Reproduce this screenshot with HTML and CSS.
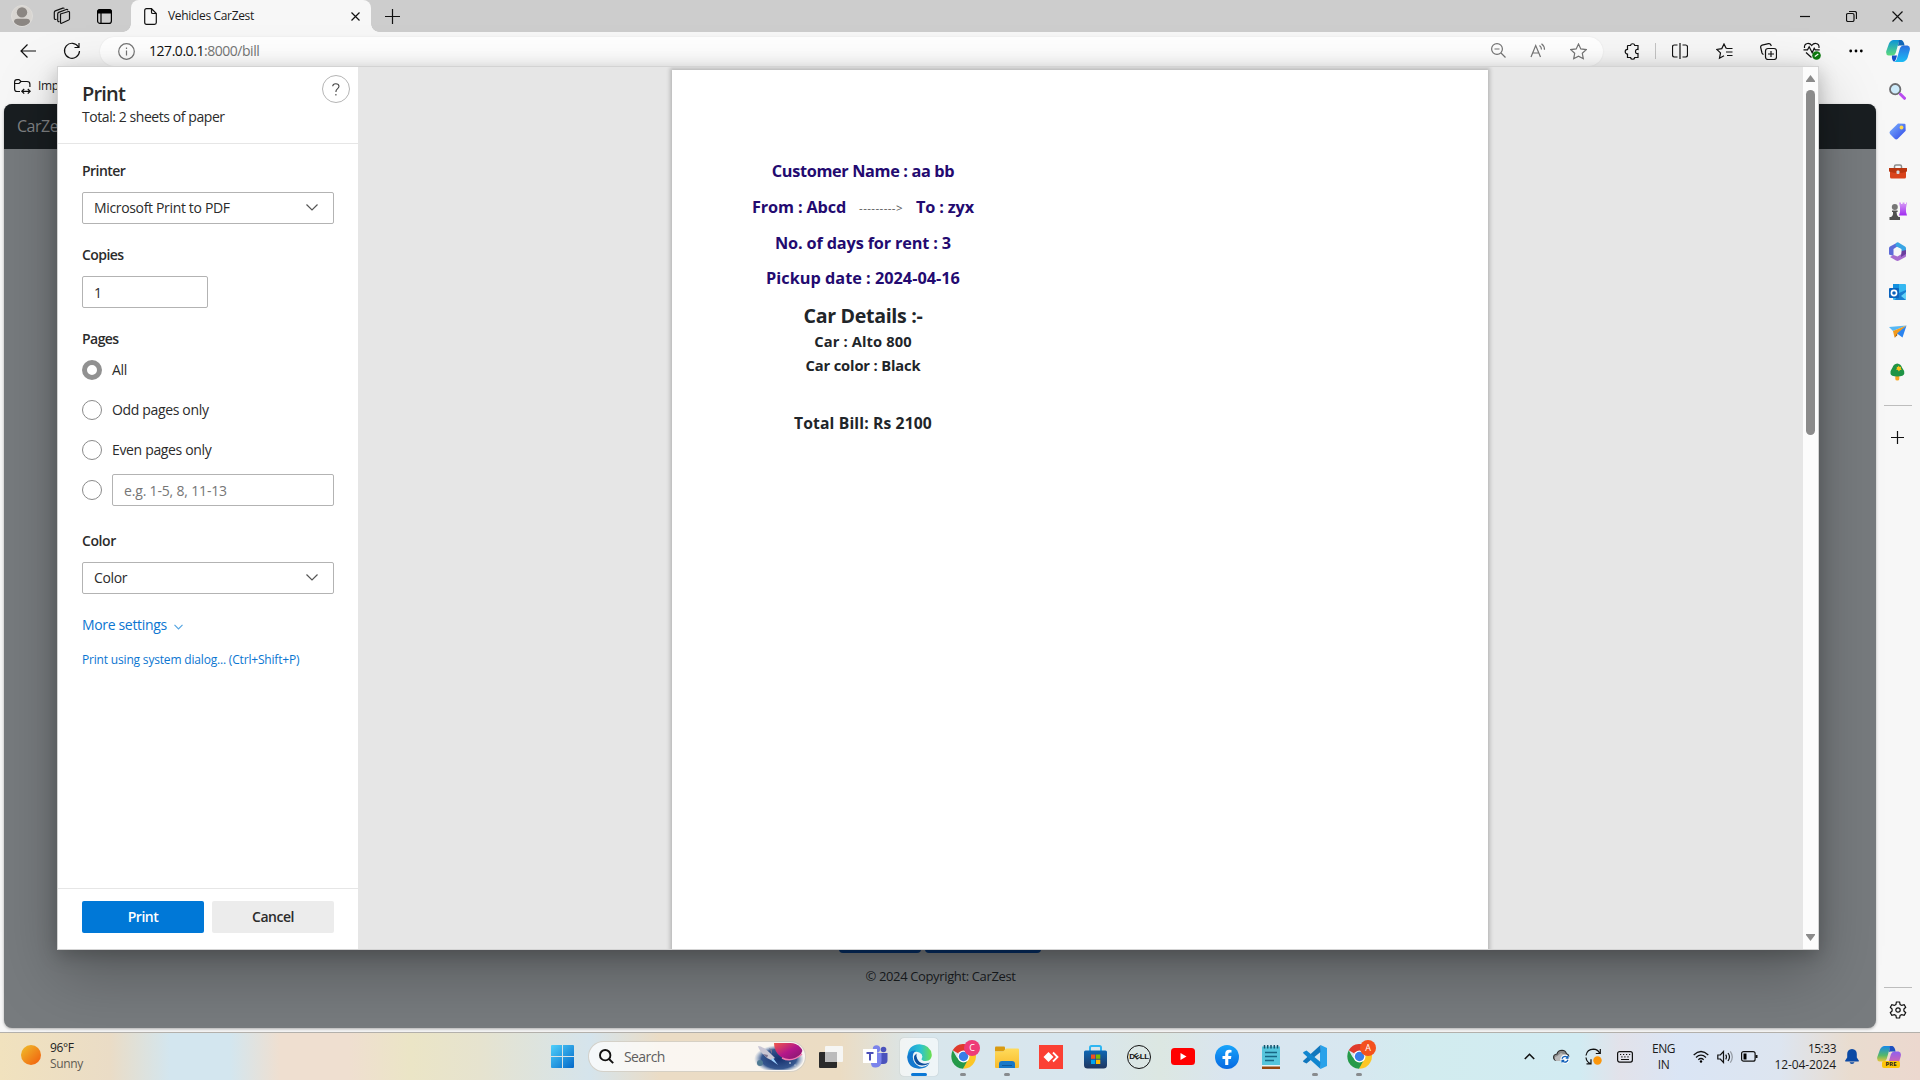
FILE: index.html
```html
<!DOCTYPE html>
<html lang="en">
<head>
<meta charset="utf-8">
<title>Vehicles CarZest</title>
<link rel="stylesheet" href="styles.css">
</head>
<body>
<svg class="defs" width="0" height="0">
  <defs>
    <linearGradient id="gWin" x1="0" y1="0" x2="1" y2="1"><stop offset="0" stop-color="#4fd0fb"/><stop offset="1" stop-color="#0469c9"/></linearGradient>
    <linearGradient id="gSun" x1="0" y1="0" x2="1" y2="1"><stop offset="0" stop-color="#efc02c"/><stop offset="1" stop-color="#f25a0c"/></linearGradient>
    <linearGradient id="gCopA" x1="0" y1="0" x2="0" y2="1"><stop offset="0" stop-color="#0c94d8"/><stop offset="1" stop-color="#5cdb7c"/></linearGradient>
    <linearGradient id="gCopB" x1="0" y1="0" x2="0" y2="1"><stop offset="0" stop-color="#2a6fe0"/><stop offset="1" stop-color="#1bbcf4"/></linearGradient>
    <linearGradient id="gCopC" x1="0" y1="0" x2="0" y2="1"><stop offset="0" stop-color="#8f5ff0"/><stop offset="1" stop-color="#f2668f"/></linearGradient>
    <linearGradient id="gCopD" x1="0" y1="0" x2="0" y2="1"><stop offset="0" stop-color="#1688e8"/><stop offset=".6" stop-color="#55b86a"/><stop offset="1" stop-color="#e9c53a"/></linearGradient>
    <linearGradient id="gTag" x1="0" y1="0" x2="1" y2="1"><stop offset="0" stop-color="#7db4ff"/><stop offset="1" stop-color="#2f45e6"/></linearGradient>
    <linearGradient id="gRook" x1="0" y1="0" x2="0" y2="1"><stop offset="0" stop-color="#d79cf5"/><stop offset="1" stop-color="#a02bf0"/></linearGradient>
    <linearGradient id="gEdge" x1="0" y1="0" x2="1" y2="0"><stop offset="0" stop-color="#1c9bdc"/><stop offset=".55" stop-color="#2bc3cf"/><stop offset="1" stop-color="#6ce04b"/></linearGradient>
    <linearGradient id="gPlanet" x1="0" y1="0" x2="1" y2="1"><stop offset="0" stop-color="#f0574a"/><stop offset=".5" stop-color="#b3178a"/><stop offset="1" stop-color="#7c1a6a"/></linearGradient>
    <radialGradient id="gSky"><stop offset="0" stop-color="#16306e"/><stop offset=".7" stop-color="#35568f"/><stop offset="1" stop-color="#7391bb" stop-opacity="0"/></radialGradient>
    <linearGradient id="gFold" x1="0" y1="0" x2="0" y2="1"><stop offset="0" stop-color="#ffdb5b"/><stop offset="1" stop-color="#f8bb2c"/></linearGradient>
    <linearGradient id="gStore" x1="0" y1="0" x2="0" y2="1"><stop offset="0" stop-color="#0e67b4"/><stop offset="1" stop-color="#1f355f"/></linearGradient>
    <linearGradient id="gFb" x1="0" y1="0" x2="0" y2="1"><stop offset="0" stop-color="#18a4fb"/><stop offset="1" stop-color="#0668e1"/></linearGradient>
  </defs>
</svg>
<div class="screen">
  <header class="tabstrip">
    <div class="cell cell-profile"><svg width="22" height="22" viewBox="0 0 22 22"><circle cx="11" cy="11" r="10.5" fill="#d8d5d1" stroke="#dedcd9"/><circle cx="11" cy="7.4" r="5.2" fill="#8b8682"/><path d="M3 17q0-3.3 3.500-3.300h9q3.500 0 3.500 3.300A10 10 0 0 1 3 17z" fill="#8b8682"/></svg></div>
    <div class="cell cell-spaces"><svg class="line" width="18" height="18" viewBox="0 0 18 18"><path d="M7.500 7l8-2.500q1-.2 1 .8v6.500q0 .8-.8 1.200l-7 3.200q-1.200.4-1.200-.9z"/><path d="M6.500 14.500q-1.800.5-1.800-1.300V7q0-1.200 1-1.600l7.500-2.900q1.200-.3 1.700.6M3.500 12.300Q1.300 13 1.300 11V5.500q0-1.200 1-1.600L9.800 1.100q1-.3 1.600.4"/></svg></div>
    <div class="cell cell-tabs"><svg width="15" height="15" viewBox="0 0 15 15"><path d="M3 0h9a3 3 0 0 1 3 3v1.500H0V3a3 3 0 0 1 3-3z"/><rect x=".6" y=".6" width="13.800" height="13.800" rx="2.500" fill="none" stroke="#000" stroke-width="1.200"/><path d="M4 4v10" stroke="#000" stroke-width="1.200"/></svg></div>
    <div class="tab">
      <svg class="line" width="13" height="17" viewBox="0 0 13 17"><path d="M2.500.7h5l4.800 4.800v9q0 1.800-1.800 1.800h-8Q.7 16.300.7 14.500v-12Q.7.700 2.500.7zM7.500.7v3.500q0 1.300 1.300 1.300h3.500"/></svg>
      <span class="tab-title">Vehicles CarZest</span>
      <svg class="line tab-close" width="9" height="9" viewBox="0 0 9 9"><path d="M.5.500l8 8M8.500.500l-8 8"/></svg>
    </div>
    <svg class="line newtab" width="15" height="15" viewBox="0 0 15 15"><path d="M7.500 0v15M0 7.500h15"/></svg>
    <div class="winctl">
      <div class="wc"><svg class="line" width="10" height="10" viewBox="0 0 10 10"><path d="M0 5.500h10"/></svg></div>
      <div class="wc"><svg class="line" width="11" height="11" viewBox="0 0 11 11"><rect x=".5" y="2.500" width="7.500" height="8" rx="1.500"/><path d="M3 .5h5.500q2 0 2 2V8"/></svg></div>
      <div class="wc"><svg class="line" width="11" height="11" viewBox="0 0 11 11"><path d="M.5.500l10 10M10.500.500l-10 10"/></svg></div>
    </div>
  </header>

  <div class="lower">
    <div class="main">
      <div class="toolbar">
        <div class="cell cell-back"><svg class="line" width="17" height="14" viewBox="0 0 17 14"><path d="M16 7H1M7.500.5L1 7l6.500 6.500"/></svg></div>
        <div class="cell cell-reload"><svg class="line" width="18" height="18" viewBox="0 0 18 18"><path d="M15.500 5A7.500 7.500 0 1 0 16.500 9M16 1v4.500h-4.500"/></svg></div>
        <div class="address">
          <svg class="line soft" width="17" height="17" viewBox="0 0 17 17"><circle cx="8.500" cy="8.500" r="7.800"/><path d="M8.500 7.500v5M8.500 4.600v1.300"/></svg>
          <span class="url">127.0.0.1<i>:8000/bill</i></span>
          <div class="addr-icons">
            <div class="ac"><svg class="line soft" width="15" height="15" viewBox="0 0 15 15"><circle cx="6" cy="6" r="5.400"/><path d="M10 10l4.500 4.500M3.500 6h5"/></svg></div>
            <div class="ac"><svg class="line soft" width="17" height="15" viewBox="0 0 17 15"><path d="M1 14L5.700 2.500 10.500 14M2.700 10h6M9.500 2.500q2 1.500 2 4M11.500.8q3 2.200 3 6"/></svg></div>
            <div class="ac"><svg class="line soft" width="17" height="17" viewBox="0 0 17 17"><path d="M8.500 1l2.300 4.900 5.400.7-3.900 3.700 1 5.400-4.800-2.600-4.800 2.600 1-5.400L.8 6.600l5.400-.7z"/></svg></div>
          </div>
        </div>
        <div class="tools">
          <div class="tc tc-ext"><svg class="line" width="16" height="17" viewBox="0 0 16 17"><path d="M4 2.500h2.500a2.200 2.200 0 0 1 4.300 0H14V6.500q-2.500-.4-2.500 2t2.500 2V14.500h-3.200a2.200 2.200 0 0 1-4.300 0H3.500V11a2.300 2.300 0 1 1 0-4.600V3q0-.5.500-.5z"/></svg></div>
          <div class="tdiv"></div>
          <div class="tc"><svg class="line" width="16" height="16" viewBox="0 0 16 16"><path d="M5.500 2h-3q-2 0-2 2v8q0 2 2 2h3M10.500 2h3q2 0 2 2v8q0 2-2 2h-3M8 0v16"/></svg></div>
          <div class="tc"><svg class="line" width="17" height="17" viewBox="0 0 17 17"><path d="M11 5.500L10 5 8 1 5.800 5.600.8 6.400l3.700 3.500-1 5.300L8 12.700M11 5.500h5.500M10 9h6.500M11 12.500h5.500"/></svg></div>
          <div class="tc"><svg class="line" width="17" height="17" viewBox="0 0 17 17"><rect x="5.500" y="5.500" width="11" height="11" rx="2.500"/><path d="M11 8v6M8 11h6M3.500 11.500Q2.300 11 2 10L.7 4.500q-.4-1.800 1.400-2.400L8.500.7q1.800-.3 2.400 1.300l.4 1"/></svg></div>
          <div class="tc"><svg class="line" width="18" height="18" viewBox="0 0 18 18"><path d="M1.500 6Q1 2 4.500 1.500 7 1.200 8.700 3.500 10.500 1.200 13 1.500q3.500.5 3 4.500M.5 7.800h4l1.700-3 3 6 2-4.500 1 1.500h4.500M3 10.500l5.500 5"/><circle cx="13.500" cy="13.500" r="4.300" fill="#0f7b10" stroke="none"/><path d="M11.800 14.500l3.500-2.500" stroke="#fff"/></svg></div>
          <div class="tc"><svg width="14" height="4" viewBox="0 0 14 4"><circle cx="1.700" cy="2" r="1.400"/><circle cx="7" cy="2" r="1.400"/><circle cx="12.300" cy="2" r="1.400"/></svg></div>
        </div>
      </div>
      <div class="bookmarks">
        <svg class="line" width="17" height="15" viewBox="0 0 17 15"><path d="M6 12.500H3Q.6 12.500.6 10V3Q.6.600 3 .6h2l2 1.900h6q2.900 0 2.900 2.700V8M.6 4.500H5l2-2M8 12.300h8M10.200 10l-2.400 2.300 2.400 2.300M13.800 10l2.400 2.300-2.400 2.300"/></svg>
        <span class="bm">Imp</span>
      </div>
      <div class="webpage">
        <nav class="site-nav">CarZest</nav>
        <div class="site-foot">
          <div class="site-btns"><span class="sb sb-a"></span><span class="sb sb-b"></span></div>
          <div class="copyright">© 2024 Copyright: CarZest</div>
        </div>
      </div>
    </div>
    <aside class="sidebar">
      <div class="si si-cop"><svg width="24" height="22" viewBox="0 0 24 22"><path d="M5 1q1-.9 2.500-.9h7.500q-1.800.5-2.500 3L9.700 13q-1 2.500-3.500 2.500H2.500Q-.5 15 .3 11L3 3.500Q3.800 1.500 5 1z" fill="url(#gCopA)"/><path d="M19 21q-1 .9-2.500.9H8q2-.5 2.800-3L14 8q1-2.500 3.500-2.500h4q3 .5 2.300 4.500L21.500 18q-.8 2.200-2.500 3z" fill="url(#gCopB)"/><path d="M6 15.500h5L10 19q-.8 2-2 2.800Q5.500 20 6 15.500z" fill="#1450c8"/><path d="M13 0h2.500Q18 1 18.500 5.500h-5L12 6z" fill="#1166b8"/></svg></div>
      <div class="si"><svg width="17" height="17" viewBox="0 0 17 17"><circle cx="6.200" cy="6.200" r="5.200" fill="#cdebfb" stroke="#6d6d70" stroke-width="1.800"/><path d="M11.500 11.300l4 4" stroke="#b94bf0" stroke-width="3" stroke-linecap="round"/></svg></div>
      <div class="si"><svg width="17" height="17" viewBox="0 0 17 17"><path d="M9 .5l6.500.3q1 0 1 1l.2 6L8.500 16Q7 17 5.700 15.700L1 11Q0 9.500 1 8.300z" fill="url(#gTag)"/><circle cx="12.500" cy="4.500" r="1.900" fill="#ffd84d"/></svg></div>
      <div class="si"><svg width="18" height="15" viewBox="0 0 18 15"><path d="M5.500 4V2.500Q5.500 1 7 1h4q1.500 0 1.500 1.500V4" fill="none" stroke="#8c8c8c" stroke-width="1.500"/><rect x="1" y="4" width="16" height="10.500" rx="1.500" fill="#d9431b"/><path d="M0 4h18v3.500q-9 3-18 0z" fill="#b9350f"/><rect x="7.500" y="6.500" width="3" height="3.500" rx="1" fill="#d5dbe0"/></svg></div>
      <div class="si"><svg width="18" height="19" viewBox="0 0 18 19"><path d="M10 .5h2v1.500h1.500V.500h2V2H17V.500h1L17 6v4l1 3.500h-8l1-3.500V5z" fill="url(#gRook)"/><circle cx="5.800" cy="5" r="3" fill="#777"/><path d="M3 8.500h5.600v1.500H7.500q0 3.500 2 5H11V18H.5v-3H2q2.500-1.500 2-5H3z" fill="#505050"/></svg></div>
      <div class="si"><svg width="17" height="19" viewBox="0 0 17 19"><path d="M8.500.500L1 4.500Q0 5 0 6.500v6L4.500 14V7L9 4z" fill="#5d6bd8"/><path d="M7 1l2-.8L16 4.500q1 .7 1 2V11L12.500 9V7L6.500 4z" fill="#3aa5e4"/><path d="M17 8.500v5.200q0 1-1 1.600l-6 3.300q-1.500.7-3 0L1 15l3.500-2 4 1.500L12.500 12z" fill="#a76ccf"/><path d="M12.500 9l4.500-1v4l-5 3z" fill="#6b3f9e"/><circle cx="8.600" cy="9.500" r="3.600" fill="#f7f7f7"/></svg></div>
      <div class="si"><svg width="18" height="17" viewBox="0 0 18 17"><rect x="4" y="0" width="13" height="16" rx="1" fill="#35b8f1"/><path d="M4 0h6v5H4z" fill="#1490df"/><path d="M10 9l7-3v10H6z" fill="#1a7fd0"/><path d="M17 8v8l-5-4z" fill="#62d2f8"/><rect x="0" y="4" width="10" height="10" rx="1" fill="#0a63bd"/><circle cx="5" cy="9" r="2.600" fill="none" stroke="#fff" stroke-width="1.600"/></svg></div>
      <div class="si"><svg width="18" height="14" viewBox="0 0 18 14"><path d="M0 2L17.500.5 4 6z" fill="#57b8f5"/><path d="M17.500.500L4 6l1.500 6.500 3-3.500z" fill="#f39b1d"/><path d="M17.500.500L8 8.500l5.500 4z" fill="#2b84ef"/><path d="M5.500 13l3-3-1-1z" fill="#9b5508"/></svg></div>
      <div class="si"><svg width="15" height="18" viewBox="0 0 15 18"><path d="M5.300 13h4v3q0 1.500-2 1.500t-2-1.500z" fill="#f5a623"/><path d="M7.300.5Q11 1 12 4.500q2.500 3 2.300 6Q14 13.500 7.300 13.500T.5 10.500q-.3-3 2-6Q3.500 1 7.300.5z" fill="#1f9446"/><path d="M8.500 2.500l1.100 1.400 1.700-.2-.6 1.600 1 1.400-1.700.2-1.100 1.500-.9-1.500L6 6.600l1-1.300-.4-1.600 1.400.2z" fill="#ffc21a"/></svg></div>
      <div class="sdiv sdiv-top"></div>
      <div class="si si-plus"><svg class="line" width="13" height="13" viewBox="0 0 13 13"><path d="M6.500 0v13M0 6.500h13"/></svg></div>
      <div class="sgrow"></div>
      <div class="sdiv"></div>
      <div class="si si-gear"><svg class="line" width="18" height="18" viewBox="0 0 18 18"><circle cx="9" cy="9" r="2.200"/><path d="M7.400 1h3.200l.5 2.500 1.600.9 2.500-.8L16.700 6.300 14.900 8v2l1.800 1.700-1.500 2.700-2.500-.8-1.600.9-.5 2.500H7.400l-.5-2.500-1.600-.9-2.500.8-1.500-2.700L3.100 10V8L1.300 6.300l1.500-2.700 2.500.8 1.600-.9z"/></svg></div>
    </aside>

    <section class="dialog">
      <div class="panel">
        <div class="p-head">
          <div>
            <div class="p-title">Print</div>
            <div class="p-sub">Total: 2 sheets of paper</div>
          </div>
          <div class="help"><svg class="line help-q" width="8" height="13" viewBox="0 0 8 13"><path d="M.7 3.300Q.8.700 3.800.7t3.200 2.600q0 1.400-1.600 2.600T3.900 9M3.900 11v1.400"/></svg></div>
        </div>
        <div class="p-body">
          <div class="lbl">Printer</div>
          <div class="box"><span>Microsoft Print to PDF</span><svg class="line chev" width="12" height="7" viewBox="0 0 12 7"><path d="M.5.500L6 6 11.500.5"/></svg></div>
          <div class="lbl">Copies</div>
          <div class="box box-sm"><span class="one">1</span></div>
          <div class="lbl lbl-pages">Pages</div>
          <div class="opt"><span class="radio on"></span><span class="ot">All</span></div>
          <div class="opt"><span class="radio"></span><span class="ot">Odd pages only</span></div>
          <div class="opt"><span class="radio"></span><span class="ot">Even pages only</span></div>
          <div class="opt"><span class="radio"></span><div class="box box-range"><span class="ph">e.g. 1-5, 8, 11-13</span></div></div>
          <div class="lbl lbl-color">Color</div>
          <div class="box"><span>Color</span><svg class="line chev" width="12" height="7" viewBox="0 0 12 7"><path d="M.5.500L6 6 11.500.5"/></svg></div>
          <div class="more"><span>More settings</span><svg class="line" width="9" height="6" viewBox="0 0 9 6"><path d="M.5.800l4 4 4-4"/></svg></div>
          <div class="sys">Print using system dialog... (Ctrl+Shift+P)</div>
        </div>
        <div class="p-foot"><div class="btn primary">Print</div><div class="btn">Cancel</div></div>
      </div>
      <div class="preview">
        <div class="sheet">
          <div class="bill">
            <div class="row navy name">Customer Name : aa bb</div>
            <div class="row navy from"><span>From : Abcd</span><small>---------&gt;</small><span>To : zyx</span></div>
            <div class="row navy days">No. of days for rent : 3</div>
            <div class="row navy">Pickup date : 2024-04-16</div>
            <div class="row car-h">Car Details :-</div>
            <div class="row car">Car : Alto 800</div>
            <div class="row car car-c">Car color : Black</div>
            <div class="row total">Total Bill: Rs 2100</div>
          </div>
        </div>
      </div>
      <div class="scroll">
        <svg width="9" height="7" viewBox="0 0 9 7"><path d="M4.500 0L9 6v1H0V6z"/></svg>
        <div class="thumb"></div>
        <div class="sgrow"></div>
        <svg width="9" height="7" viewBox="0 0 9 7"><path d="M4.500 7L9 1V0H0v1z"/></svg>
      </div>
    </section>
  </div>

  <footer class="taskbar">
    <div class="weather">
      <svg width="20" height="20" viewBox="0 0 20 20"><circle cx="10" cy="10" r="10" fill="url(#gSun)"/></svg>
      <div class="wtext"><span>96°F</span><span class="dim">Sunny</span></div>
    </div>
    <div class="apps">
      <div class="app"><svg width="23" height="23" viewBox="0 0 23 23" fill="url(#gWin)"><path d="M0 1q0-1 1-1h10v11H0zM12 0h10q1 0 1 1v10H12zM0 12h11v11H1q-1 0-1-1zM12 12h11v10q0 1-1 1H12z"/></svg></div>
      <div class="search">
        <svg class="line mag" width="15" height="15" viewBox="0 0 15 15"><circle cx="6.200" cy="6.200" r="5.200"/><path d="M10 10l4.200 4.200"/></svg>
        <span>Search</span>
        <svg class="art" width="50" height="27" viewBox="0 0 50 27"><ellipse cx="25" cy="16" rx="25" ry="14" fill="url(#gSky)"/><path d="M20 0h28q3 10-6 15-8 4-15-1-7-5-7-14z" fill="url(#gPlanet)"/><path d="M28 15q10 5 20-4" fill="none" stroke="#f47ab0" stroke-width="1.500"/><path d="M4 3q5 0 14 9l3 3-4 2-4-2Q5 8 4 3z" fill="#c9c6d4"/><path d="M9 11l5 1-1 3zM15 5l3 2v4z" fill="#7a7390"/><path d="M19 15l5 7-7-5z" fill="#9fd2ff"/><circle cx="6" cy="20" r="3" fill="#4f7a93"/><circle cx="36" cy="20" r=".8" fill="#fff"/><circle cx="41" cy="22" r=".6" fill="#fff"/></svg>
      </div>
      <div class="app"><svg width="24" height="22" viewBox="0 0 24 22"><rect x="0" y="6" width="18" height="16" rx="1" fill="#2a2a2a"/><rect x="6" y="0" width="18" height="16" rx="1" fill="#f6f6f4"/><path d="M6 6h12v10H6z" fill="#bcbcbc"/></svg></div>
      <div class="app"><svg width="25" height="23" viewBox="0 0 25 23"><circle cx="20.500" cy="4.500" r="2.800" fill="#4b53bc"/><circle cx="13.500" cy="4" r="3.700" fill="#7b83eb"/><path d="M17 8h7.500v7q0 4-4 4H17z" fill="#4b53bc"/><path d="M8 8h10.500v8q0 6-5.500 6.500T8 17z" fill="#7b83eb"/><rect x="0" y="4" width="14" height="14" fill="#fff"/><path d="M3.500 7h7v2H8v6.500H6V9H3.500z" fill="#4b4fb8"/></svg></div>
      <div class="app active"><svg width="25" height="25" viewBox="0 0 25 25"><path d="M.5 12Q1 1 12.500.2 24 1 24.800 11q0 5.500-6 6-4.500 0-4.500-2 1.800-2 .3-4.500-3-4-8-2Q1.500 10 .5 15z" fill="url(#gEdge)"/><path d="M.3 13q1-7 8.500-6.500-3 2-3 6.500.2 6.500 6.700 9.500 5 1.500 10-3Q19 24.800 12 24.700.8 24 .3 13z" fill="#1378cf"/><path d="M9.500 9.500Q7 11 7 14.500q1 6.500 8 7 5 0 8-3-4.500 2-8.500.5-5-2-5-9.500z" fill="#0c4f9d"/><path d="M14.300 15q1.800-2 .3-4.500-1.800-2-4-1.500-2 3 0 6t5.500 3.800q3.500.8 7-1-3 0-5-.8-3.800 0-3.800-2z" fill="#e8f5fb"/></svg><b class="run wide"></b></div>
      <div class="app"><svg width="25" height="25" viewBox="0 0 25 25"><path d="M12.500 12.500L1.700 6.300A12.300 12.300 0 0 1 23.300 6.500z" fill="#df3a2c"/><path d="M12.500 12.500L23.300 6.500a12.300 12.300 0 0 1-11 18.300z" fill="#fcc626"/><path d="M12 24.800l4.500-8.300-7 .5-4-4-3.800-6.700Q-1 12 1.500 18q3.500 6.300 10.500 6.800z" fill="#259a49"/><circle cx="12.500" cy="12.500" r="6" fill="#fff"/><circle cx="12.500" cy="12.500" r="4.700" fill="#397ee8"/></svg><em class="bdg pink">C</em><b class="run"></b></div>
      <div class="app"><svg width="24" height="22" viewBox="0 0 24 22"><path d="M0 1.500Q0 .5 1 .5h8q1 0 1 1v4H0z" fill="#d99a10"/><path d="M0 5.500h8L11 2.500h12q1 0 1 1V21q0 1-1 1H1q-1 0-1-1z" fill="url(#gFold)"/><path d="M4 22v-4q0-3 3-3h10q3 0 3 3v4z" fill="#1677c8"/><path d="M7 19h10v1H7z" fill="#0b5699"/></svg><b class="run"></b></div>
      <div class="app"><svg width="24" height="24" viewBox="0 0 24 24"><path d="M0 0h24v24H0z" fill="#fb4034"/><path d="M9.500 7l5 5-5 5-5-5z" fill="#fff"/><path d="M14 7.500l4.500 4.500-4.500 4.500" fill="none" stroke="#fff" stroke-width="1.800"/></svg></div>
      <div class="app"><svg width="23" height="24" viewBox="0 0 23 24"><path d="M6 7V2.500Q6 1 7.500 1h8Q17 1 17 2.500V7" fill="none" stroke="#2fb6f2" stroke-width="2"/><path d="M0 7q0-1.500 1.500-1.500h20Q23 5.500 23 7v13q0 3.500-3.500 3.500h-16Q0 23.500 0 20z" fill="url(#gStore)"/><path d="M7 9.500h4.300v4.300H7z" fill="#f25022"/><path d="M12 9.500h4.300v4.300H12z" fill="#7fba00"/><path d="M7 14.700h4.300V19H7z" fill="#00a4ef"/><path d="M12 14.700h4.300V19H12z" fill="#ffb900"/></svg></div>
      <div class="app"><div class="dell"><span>D</span><span class="slant">E</span><span>LL</span></div></div>
      <div class="app"><svg width="24" height="17" viewBox="0 0 24 17"><rect width="24" height="17" rx="3.500" fill="#f00"/><path d="M9.500 5l6 3.500-6 3.500z" fill="#fff"/></svg></div>
      <div class="app"><svg width="24" height="24" viewBox="0 0 24 24"><circle cx="12" cy="12" r="12" fill="url(#gFb)"/><path d="M10.200 20v-6H7.500v-3h2.700V8.800q0-4 4-4l2.300.2v2.600h-1.300q-1.900 0-1.900 1.700V11h3.100l-.5 3h-2.600v6z" fill="#fff"/></svg></div>
      <div class="app"><svg width="18" height="24" viewBox="0 0 18 24"><path d="M0 21h18v3H0z" fill="#96480f"/><path d="M0 1.500h18V21H0z" fill="#56c5dc"/><path d="M0 20h18v1.500H0z" fill="#e8f2f4"/><path d="M2.500 0v3.500M5.700 0v3.500M9 0v3.500M12.300 0v3.500M15.500 0v3.500" stroke="#17536c" stroke-width="1.500"/><path d="M3 7.500h12M3 11.500h12M3 15.500h9" stroke="#176684" stroke-width="1.500"/></svg></div>
      <div class="app"><svg width="24" height="24" viewBox="0 0 24 24"><path d="M17.500 0L24 3v18l-6.500 3L17 17V7z" fill="#2aa2ea"/><path d="M17.500 0v7L3.500 18.500.5 17q-.8-.8 0-1.500z" fill="#1177bd"/><path d="M17.500 24v-7L3.500 5.500.5 7q-.8.800 0 1.500z" fill="#1186cf"/></svg><b class="run"></b></div>
      <div class="app"><svg width="25" height="25" viewBox="0 0 25 25"><path d="M12.500 12.500L1.700 6.300A12.300 12.300 0 0 1 23.300 6.500z" fill="#df3a2c"/><path d="M12.500 12.500L23.300 6.500a12.300 12.300 0 0 1-11 18.300z" fill="#fcc626"/><path d="M12 24.800l4.500-8.300-7 .5-4-4-3.800-6.700Q-1 12 1.500 18q3.500 6.300 10.500 6.800z" fill="#259a49"/><circle cx="12.500" cy="12.500" r="6" fill="#fff"/><circle cx="12.500" cy="12.500" r="4.700" fill="#397ee8"/></svg><em class="bdg orange">A</em><b class="run"></b></div>
    </div>
    <div class="tray">
      <div class="tr"><svg class="line thick" width="11" height="7" viewBox="0 0 11 7"><path d="M.8 6l4.700-4.700L10.200 6"/></svg></div>
      <div class="tr"><svg width="17" height="15" viewBox="0 0 17 15"><path d="M3.500 11.500Q.6 11 .6 8.200T4 5Q5 1.300 9 1.300q3.500.2 4.500 3.500 2 .5 2.500 2.700" fill="#8b8b8b" stroke="#2a2a2a" stroke-width="1.100"/><path d="M2 8q3-1 6-4l6 3-5 5H3.500Q1 11 2 8z" fill="#b9b9b9"/><circle cx="12" cy="10.200" r="4.600" fill="#fff"/><path d="M9 9.700q.8-2.400 3.200-2.400 1.600 0 2.600 1.400M15 6.800v2.300h-2.300M15 10.700q-.8 2.400-3.200 2.400-1.600 0-2.600-1.400M9 13.600v-2.300h2.300" fill="none" stroke="#0f5fb8" stroke-width="1.200"/></svg></div>
      <div class="tr"><svg class="line" width="17" height="17" viewBox="0 0 17 17"><path d="M1 7.500Q2 1.500 8.500 1.200q4 .1 6 3.800M15.300 1v4.500h-4.500M1 9.500q.5 4.500 4.500 6M1.500 15.800H6v-4.500"/><circle cx="12.500" cy="12.500" r="4.200" fill="#fb960b" stroke="none"/></svg></div>
      <div class="tr"><svg class="line" width="16" height="12" viewBox="0 0 16 12"><rect x=".6" y=".6" width="14.800" height="10.500" rx="2"/><path d="M3 3.500h1.200M6 3.500h1.200M9 3.500h1.200M12 3.500h1.200M4.300 5.800h1.200M7.300 5.800h1.200M10.400 5.800h1.200M4 8.500h8"/></svg></div>
      <div class="lang"><span>ENG</span><span>IN</span></div>
      <div class="net">
        <svg class="line" width="16" height="13" viewBox="0 0 16 13"><path d="M.7 5q7.300-7 14.600 0M3 7.500q5-4.600 10 0M5.300 9.700q2.700-2.400 5.400 0"/><circle cx="8" cy="11.500" r="1.200" fill="#000" stroke="none"/></svg>
        <svg class="line" width="16" height="14" viewBox="0 0 16 14"><path d="M.8 5h2.500L6.500 1.500v11L3.300 9H.8zM8.700 4.700q1.500 2.300 0 4.600M11 3q3 4 0 8"/><path d="M13.300 1.300q4 5.700 0 11.400" opacity=".35"/></svg>
        <svg class="line" width="17" height="11" viewBox="0 0 17 11"><rect x=".6" y=".6" width="13.500" height="9.600" rx="2"/><path d="M2.500 2.500h3v6h-3z" fill="#000" stroke="none"/><path d="M15.500 4v3" stroke-width="2"/></svg>
      </div>
      <div class="clock"><span class="time">15:33</span><span class="date">12-04-2024</span></div>
      <svg class="bell" width="14" height="15" viewBox="0 0 14 15"><path d="M7 0q4.800.3 4.800 5v3.500l2 3q.3 1-.8 1H1q-1.100 0-.8-1l2-3V5Q2.200.3 7 0zM4.500 13.200h5Q9 15 7 15t-2.500-1.800z" fill="#0b49a4"/></svg>
      <div class="cop"><svg width="24" height="22" viewBox="0 0 24 22"><path d="M5 1q1-.9 2.500-.9h7.500q-1.800.5-2.500 3L9.700 13q-1 2.500-3.500 2.500H2.500Q-.5 15 .3 11L3 3.500Q3.800 1.500 5 1z" fill="url(#gCopD)"/><path d="M19 21q-1 .9-2.500.9H8q2-.5 2.800-3L14 8q1-2.500 3.500-2.500h4q3 .5 2.300 4.500L21.500 18q-.8 2.200-2.500 3z" fill="url(#gCopC)"/><path d="M13 0h2.500Q18 1 18.500 5.500h-5L12 6z" fill="#1d4fc0"/></svg><em>PRE</em></div>
    </div>
  </footer>
</div>
</body>
</html>
```
FILE: styles.css
```css
* { box-sizing: border-box; }
body { margin: 0; font-family: "Open Sans", "Noto Sans", sans-serif; font-size: 14px; color: #2b2b2b; }
.defs { position: absolute; }
svg { display: block; flex: none; }
.line { fill: none; stroke: #111; stroke-width: 1.2; }
.soft { stroke: #757575; }
.thick { stroke-width: 1.6; }
.screen { width: 1920px; height: 1080px; display: flex; flex-direction: column; overflow: hidden; background: #f7f7f7; }
.cell { display: flex; flex: none; align-items: center; justify-content: center; }

/* Tab strip */
.tabstrip { height: 32px; flex: none; display: flex; align-items: center; background: #cdcdcd; }
.cell-profile { width: 44px; }
.cell-spaces { width: 36px; }
.cell-tabs { width: 48px; }
.tab { position: relative; width: 240px; height: 32px; margin-left: 3px; padding: 0 11px 0 13px; display: flex; align-items: center; background: #f7f7f7; border-radius: 8px 8px 0 0; }
.tab::before, .tab::after { content: ""; position: absolute; bottom: 0; width: 8px; height: 8px; }
.tab::before { left: -8px; background: radial-gradient(circle at 0 0, #cdcdcd 7.5px, #f7f7f7 8px); }
.tab::after { right: -8px; background: radial-gradient(circle at 100% 0, #cdcdcd 7.5px, #f7f7f7 8px); }
.tab-title { margin-left: 11px; padding-bottom: 1px; font-size: 12px; letter-spacing: -.34px; color: #1b1b1b; white-space: nowrap; }
.tab-close { margin-left: auto; }
.newtab { margin-left: 14px; }
.winctl { margin-left: auto; display: flex; }
.wc { width: 46px; display: flex; justify-content: center; }

/* Toolbar and bookmarks */
.lower { position: relative; flex: 1; display: flex; min-height: 0; }
.main { width: 1876px; flex: none; display: flex; flex-direction: column; }
.toolbar { height: 36px; flex: none; display: flex; align-items: center; padding-top: 2px; }
.cell-back { width: 56px; }
.cell-reload { width: 32px; }
.address { width: 1503px; flex: none; height: 29px; margin-left: 12px; padding-left: 18px; display: flex; align-items: center; background: #fff; border-radius: 15px; box-shadow: 0 0 2px rgba(0,0,0,.08); }
.url { margin-left: 14px; padding-bottom: 1px; font-size: 14px; letter-spacing: -.46px; color: #111; white-space: nowrap; }
.url i { font-style: normal; color: #767676; }
.addr-icons { margin-left: auto; display: flex; margin-right: 5px; }
.ac { width: 40px; display: flex; justify-content: center; }
.tools { display: flex; flex: none; align-items: center; }
.tc { width: 44px; flex: none; display: flex; justify-content: center; }
.tc-ext { width: 50px; padding-left: 8px; }
.tdiv { width: 1px; height: 16px; background: #c4c4c4; margin-left: 2px; margin-right: 2px; }
.bookmarks { height: 36px; flex: none; display: flex; align-items: center; padding-left: 14px; gap: 7px; font-size: 12px; color: #222; }
.bm { letter-spacing: -.3px; padding-bottom: 1px; }

/* Dimmed page */
.webpage { margin-left: 4px; height: 924px; display: flex; flex-direction: column; background: #777b7e; border-radius: 8px; overflow: hidden; box-shadow: 0 1px 3px rgba(0,0,0,.3); }
.site-nav { height: 45px; padding: 0 13px; line-height: 45px; font-size: 16px; letter-spacing: -.5px; color: #808284; background: #191e21; }
.site-foot { margin-top: auto; height: 86px; display: flex; flex-direction: column; align-items: center; padding-left: 1px; }
.site-btns { display: flex; gap: 4px; padding-right: 1px; }
.sb { height: 11px; background: #052f66; border-radius: 0 0 4px 4px; }
.sb-a { width: 82px; }
.sb-b { width: 116px; }
.copyright { margin-top: 13px; font-size: 13px; line-height: 20px; letter-spacing: -.365px; color: #191c1f; white-space: nowrap; }

/* Sidebar */
.sidebar { width: 44px; height: 1000px; padding-right: 1px; display: flex; flex-direction: column; align-items: center; }
.si { height: 40.2px; flex: none; display: flex; align-items: center; justify-content: center; }
.si-cop { height: 38px; margin-bottom: 1px; }
.sdiv { width: 28px; height: 1px; background: #bdbdbd; flex: none; }
.sdiv-top { margin-top: 12px; }
.si-plus { height: 63px; }
.sgrow { flex: 1; }
.si-gear { height: 44px; }

/* Print dialog */
.dialog { position: absolute; left: 57px; top: 34px; width: 1762px; height: 884px; display: flex; border: 1px solid #d3d3d3; background: #fff; box-shadow: 0 25px 58px rgba(0,0,0,.25), 0 5px 18px rgba(0,0,0,.22); }
.panel { width: 300px; display: flex; flex-direction: column; white-space: nowrap; letter-spacing: -.34px; }
.p-head { height: 77px; flex: none; padding: 8px 8px 0 24px; display: flex; justify-content: space-between; border-bottom: 1px solid #e6e6e6; }
.p-title { font-size: 20px; line-height: 38px; height: 32px; font-weight: 600; letter-spacing: -.8px; }
.p-sub { line-height: 20px; letter-spacing: -.43px; }
.help { width: 28px; height: 28px; border: 1px solid #b5b5b5; border-radius: 50%; display: flex; align-items: center; justify-content: center; }
.help-q { stroke: #444; stroke-width: 1.1; }
.p-body { flex: 1; padding: 17px 24px 0; display: flex; flex-direction: column; }
.lbl { font-weight: 600; line-height: 20px; margin-bottom: 11px; letter-spacing: -.55px; }
.box { height: 32px; border: 1px solid #b3b3b3; border-radius: 2px; padding: 0 15px 1px 11px; display: flex; align-items: center; justify-content: space-between; margin-bottom: 21px; }
.chev { stroke: #555; }
.box-sm { width: 126px; }
.one { position: relative; top: 1px; }
.lbl-pages { margin-bottom: 1px; }
.opt { height: 40px; display: flex; align-items: center; gap: 10px; }
.ot { padding-bottom: 1px; }
.radio { width: 20px; height: 20px; border: 1px solid #8a8a8a; border-radius: 50%; flex: none; }
.radio.on { border: 5px solid #919191; }
.box-range { flex: 1; margin: 0; }
.ph { color: #767676; letter-spacing: -.17px; position: relative; top: 1px; }
.lbl-color { margin-top: 21px; letter-spacing: -.4px; }
.more { display: flex; align-items: center; gap: 7px; line-height: 20px; color: #0b76d1; }
.more .line { stroke: #55a5e2; margin-top: 3px; }
.sys { margin-top: 15px; line-height: 20px; font-size: 12px; letter-spacing: -.18px; color: #0b76d1; }
.p-foot { height: 61px; flex: none; border-top: 1px solid #e6e6e6; padding: 12px 24px 0; display: flex; gap: 8px; }
.btn { width: 122px; height: 32px; line-height: 31px; text-align: center; border-radius: 2px; background: #ececec; font-weight: 600; letter-spacing: -.5px; }
.primary { background: #0078d7; color: #fff; }

/* Preview */
.preview { width: 1445px; background: #e6e6e6; padding: 3px 0 0 314px; overflow: hidden; display: flex; }
.sheet { width: 816px; height: 900px; flex: none; background: #fff; box-shadow: 0 0 4px 2px rgba(0,0,0,.2); }
.bill { width: 382px; padding-top: 83px; font-weight: 700; color: #212529; }
.row { display: flex; justify-content: center; white-space: nowrap; line-height: 36px; height: 36px; font-size: 16.3px; }
.navy { color: #230a70; }
.name { letter-spacing: -.36px; }
.days { height: 35px; }
.days, .from { letter-spacing: -.16px; }
.from small { font-size: 11.5px; letter-spacing: .4px; font-weight: 400; color: #555; margin: 0 13px; padding-top: 1px; }
.car-h { font-size: 19.6px; line-height: 28px; height: 27px; margin-top: 6px; letter-spacing: -.32px; }
.car { font-size: 14.7px; line-height: 24px; height: 24px; letter-spacing: .12px; }
.car-c { letter-spacing: -.14px; }
.total { font-size: 15.7px; margin-top: 28px; letter-spacing: .13px; }
.scroll { width: 15px; background: #fcfcfc; display: flex; flex-direction: column; align-items: center; padding: 8px 0; fill: #8b8b8b; }
.thumb { width: 9px; height: 345px; border-radius: 5px; background: #8b8b8b; margin-top: 8px; }

/* Taskbar */
.taskbar { height: 48px; flex: none; display: flex; position: relative; border-top: 1px solid #b3b0ab; background: linear-gradient(90deg, #f1e2be 0, #eadcc6 110px, #d3e6ef 170px, #d3e6ef 230px, #efdfd0 280px, #efdfd0 350px, #ebe5c6 410px, #e6e3cf 480px, #d5e4ec 590px, #ebdcc5 660px, #ebdcc3 840px, #d8e6ec 920px, #d8e6ee 1080px, #dce7e2 1160px, #d9e5f0 1230px, #d7e7f0 1350px, #d2ecef 1420px, #d2ebf2 1580px, #e2e2ea 1620px, #dae5f5 1680px, #dde5f0 1780px, #e9dccf 1850px, #ecd8cf 1920px); }
.weather { width: 540px; padding-left: 21px; display: flex; gap: 9px; align-items: flex-start; }
.weather svg { margin-top: 12px; }
.wtext { display: flex; flex-direction: column; font-size: 12px; line-height: 16px; letter-spacing: -.33px; padding-top: 7px; color: #222; }
.wtext .dim { color: #5f5b52; }
.apps { display: flex; align-items: center; }
.app { position: relative; width: 44px; height: 46px; display: flex; align-items: center; justify-content: center; }
.active::before { content: ""; position: absolute; left: 3px; top: 4px; width: 38px; height: 38px; border-radius: 4px; background: rgba(255,255,255,.6); box-shadow: 0 0 1px rgba(0,0,0,.3); }
.app svg { position: relative; }
.run { position: absolute; left: 19px; bottom: 4px; width: 6px; height: 3px; border-radius: 2px; background: #888b8e; }
.run.wide { left: 14px; width: 16px; background: #0a78d6; }
.bdg { position: absolute; left: 23px; top: 6px; width: 16px; height: 16px; border-radius: 50%; color: #fff; font: 9px/16px "Open Sans", sans-serif; text-align: center; }
.pink { background: #ee3b77; }
.orange { background: #f4511e; }
.search { width: 218px; height: 31px; margin: 0 3px 0 4px; border-radius: 16px; background: rgba(255,255,255,.75); border: 1px solid rgba(160,150,130,.4); display: flex; align-items: center; padding: 0 1px 0 10px; color: #5e5e5e; }
.mag { stroke-width: 1.9; }
.search span { margin-left: 10px; padding-bottom: 1px; letter-spacing: -.6px; }
.art { margin-left: auto; border-radius: 0 14px 14px 0; }
.dell { width: 24px; height: 24px; border: 1.5px solid #111; border-radius: 50%; display: flex; align-items: center; justify-content: center; font: 700 8px/1 "Liberation Sans", sans-serif; color: #111; letter-spacing: -.4px; }
.slant { transform: rotate(-35deg); }
.tray { margin-left: auto; height: 47px; display: flex; align-items: center; font-size: 12px; line-height: 16px; color: #1b1b1b; }
.tr { width: 32px; display: flex; justify-content: center; }
.lang { width: 44px; padding-left: 1px; display: flex; flex-direction: column; align-items: center; letter-spacing: -.5px; }
.net { display: flex; align-items: center; gap: 8px; margin-left: 8px; }
.clock { width: 79px; padding-right: 1px; display: flex; flex-direction: column; align-items: flex-end; }
.time { letter-spacing: -.5px; }
.date { letter-spacing: -.1px; }
.bell { margin-left: 8px; }
.cop { position: relative; margin: 0 19px 0 18px; }
.cop em { position: absolute; left: 5px; top: 15px; width: 18px; height: 7px; background: #fdc60a; border-radius: 2px; font: 700 6px/7px "Open Sans", sans-serif; text-align: center; }
```
